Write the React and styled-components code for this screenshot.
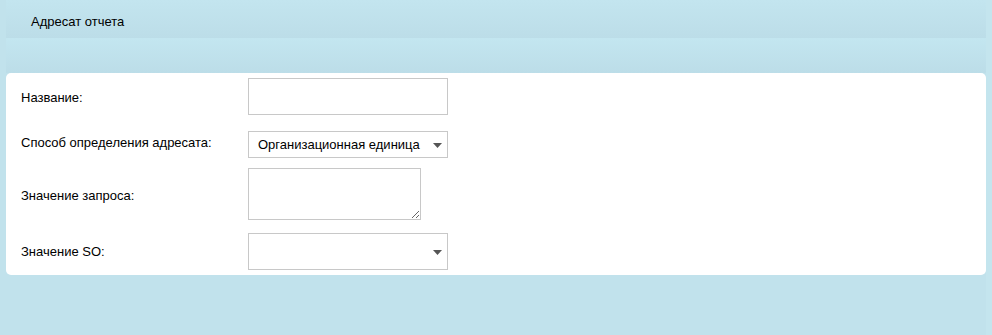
import React from "react";
import styled, { createGlobalStyle } from "styled-components";

const Global = createGlobalStyle`
  html, body {
    margin: 0;
    padding: 0;
    background: #c0dfe9;
    font-family: "Liberation Sans", Arial, sans-serif;
    font-size: 13px;
    color: #000;
  }
`;

const Page = styled.div`
  width: 992px;
  height: 335px;
  background: linear-gradient(to right, #c1e2ec 0, #c1e2ec 986px, #c4e5ee 986px);
  box-sizing: border-box;
  padding: 0 6px;
`;

const Header = styled.div`
  height: 38px;
  box-sizing: border-box;
  padding: 14px 0 0 25px;
  background: linear-gradient(to bottom, #c3e5ef, #bcdde8);
  line-height: 15px;
`;

const Band = styled.div`
  height: 35px;
  background: linear-gradient(to bottom, #c3e6f0, #bcdde8);
`;

const Card = styled.div`
  background: #fff;
  border-radius: 5px;
  padding: 0 15px;
`;

const Row = styled.div`
  display: grid;
  grid-template-columns: 227px auto;
  align-items: center;
  padding: 5px 0;
`;

const Label = styled.div`
  line-height: 15px;
  padding-top: 2px;
`;

const Control = styled.div`
  margin-top: ${(p) => p.$mt || 0}px;
  position: relative;
  width: ${(p) => p.$w}px;
  height: ${(p) => p.$h}px;
`;

const TextInput = styled.input`
  box-sizing: border-box;
  width: 100%;
  height: 100%;
  border: 1px solid #c8c8c8;
  margin: 0;
  padding: 0 8px;
  font: inherit;
  outline: none;
`;

const TextArea = styled.textarea`
  box-sizing: border-box;
  width: 100%;
  height: 100%;
  border: 1px solid #c8c8c8;
  margin: 0;
  padding: 4px 8px;
  font: inherit;
  outline: none;
  display: block;
`;

const SelectBox = styled.select`
  appearance: none;
  -webkit-appearance: none;
  box-sizing: border-box;
  width: 100%;
  height: 100%;
  border: 1px solid #c8c8c8;
  border-radius: 0;
  background: #fff;
  margin: 0;
  padding: 0 0 0 9px;
  font: inherit;
  color: #000;
  outline: none;
`;

const Arrow = styled.svg`
  position: absolute;
  right: 6px;
  top: 50%;
  margin-top: -2px;
  pointer-events: none;
`;

function Select({ value, options }) {
  return (
    <>
      <SelectBox defaultValue={value}>
        {options.map((o) => (
          <option key={o} value={o}>
            {o}
          </option>
        ))}
      </SelectBox>
      <Arrow width="9" height="5" viewBox="0 0 9 5">
        <path d="M0 0 H9 L4.5 5 Z" fill="#555" />
      </Arrow>
    </>
  );
}

export default function App() {
  return (
    <>
      <Global />
      <Page>
        <Header>Адресат отчета</Header>
        <Band />
        <Card>
          <Row>
            <Label>Название:</Label>
            <Control $w={200} $h={37}>
              <TextInput type="text" />
            </Control>
          </Row>
          <Row>
            <Label>Способ определения адресата:</Label>
            <Control $w={200} $h={27} $mt={6}>
              <Select
                value="Организационная единица"
                options={["Организационная единица", "Запрос"]}
              />
            </Control>
          </Row>
          <Row>
            <Label>Значение запроса:</Label>
            <Control $w={173} $h={52}>
              <TextArea />
            </Control>
          </Row>
          <Row>
            <Label>Значение SO:</Label>
            <Control $w={200} $h={37} $mt={3}>
              <Select value="" options={[""]} />
            </Control>
          </Row>
        </Card>
      </Page>
    </>
  );
}
